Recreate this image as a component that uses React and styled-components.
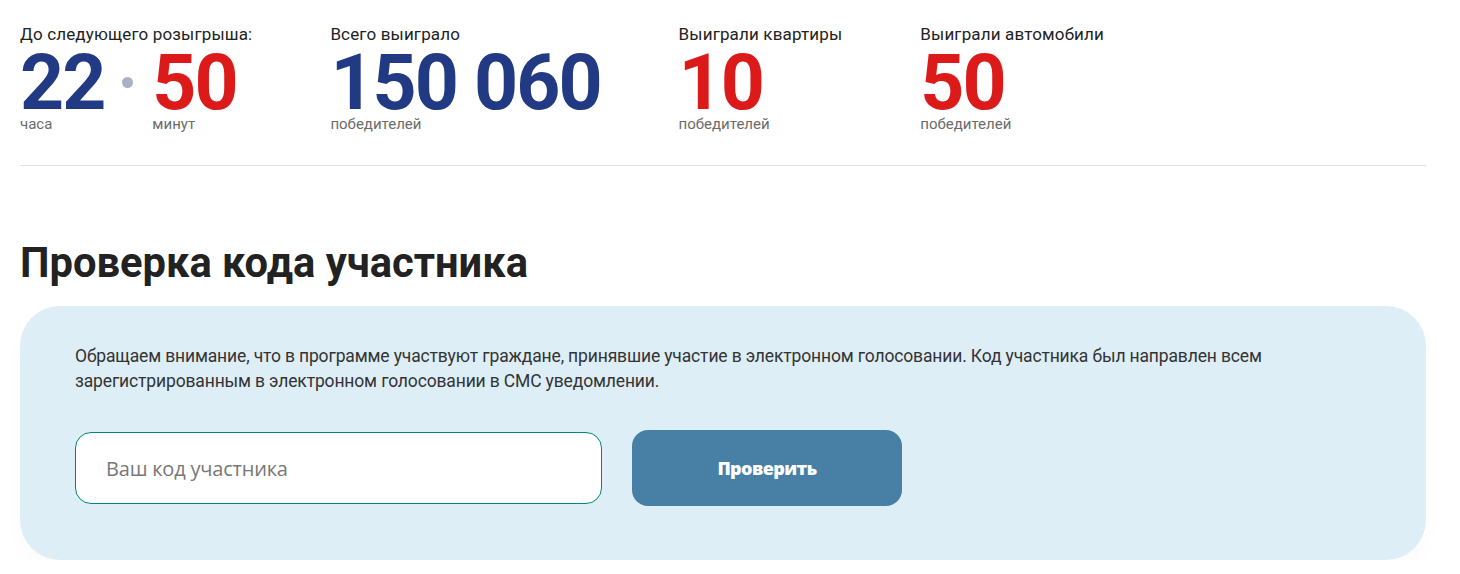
import styled, { createGlobalStyle } from "styled-components";

const GlobalStyle = createGlobalStyle`
  * { box-sizing: border-box; }
  body {
    margin: 0;
    background: #fff;
    font-family: Roboto, "Liberation Sans", sans-serif;
    color: #222;
  }
`;

const Page = styled.div`
  padding: 24px 34px 0 20px;
`;

const Stats = styled.div`
  display: flex;
  gap: 78px;
  padding-bottom: 33px;
  border-bottom: 1px solid #dde1e8;
`;

const Stat = styled.div`
  display: flex;
  flex-direction: column;
`;

const Label = styled.div`
  font-size: 17px;
  line-height: 21px;
  letter-spacing: 0.15px;
  color: #222;
`;

const Timer = styled.div`
  display: flex;
  align-items: flex-start;
`;

const TimerPart = styled.div`
  display: flex;
  flex-direction: column;
`;

const Dot = styled.span`
  width: 11px;
  height: 11px;
  border-radius: 50%;
  background: #aab1c3;
  margin: 32px 19px 0 18px;
`;

const Number = styled.div`
  font-size: 77px;
  font-weight: 700;
  line-height: 64px;
  letter-spacing: -2px;
  margin-top: 6px;
  color: ${(p) => (p.$red ? "#dd1a1a" : "#213a83")};
`;

const Caption = styled.div`
  font-size: 15px;
  line-height: 16px;
  margin-top: 1px;
  color: #6b6b6b;
`;

const Title = styled.h1`
  margin: 72px 0 0;
  font-size: 41.7px;
  line-height: 50px;
  font-weight: 700;
  color: #222;
`;

const Card = styled.div`
  margin-top: 18px;
  background: #deeef7;
  border-radius: 40px;
  padding: 38px 55px 54px;
  box-shadow: 0 12px 24px rgba(0, 0, 0, 0.02);
`;

const Text = styled.p`
  margin: 0;
  font-size: 17.5px;
  line-height: 25px;
  letter-spacing: -0.15px;
  color: #333;
`;

const Form = styled.div`
  display: flex;
  align-items: center;
  gap: 30px;
  margin-top: 36px;
`;

const Input = styled.input`
  width: 527px;
  height: 72px;
  border: 1px solid #00877a;
  border-radius: 16px;
  background: #fff;
  padding: 0 30px;
  font-family: "Open Sans", sans-serif;
  font-size: 20px;
  letter-spacing: -0.2px;
  color: #333;
  outline: none;

  &::placeholder {
    color: #777;
  }
`;

const Button = styled.button`
  width: 270px;
  height: 76px;
  border: none;
  border-radius: 16px;
  background: #4880a5;
  color: #fff;
  font-family: "Open Sans", sans-serif;
  font-size: 18px;
  font-weight: 800;
  letter-spacing: -0.6px;
  cursor: pointer;
`;

export default function App() {
  return (
    <Page>
      <GlobalStyle />
      <Stats>
        <Stat>
          <Label>До следующего розыгрыша:</Label>
          <Timer>
            <TimerPart>
              <Number>22</Number>
              <Caption>часа</Caption>
            </TimerPart>
            <Dot />
            <TimerPart>
              <Number $red>50</Number>
              <Caption>минут</Caption>
            </TimerPart>
          </Timer>
        </Stat>
        <Stat>
          <Label>Всего выиграло</Label>
          <Number>150 060</Number>
          <Caption>победителей</Caption>
        </Stat>
        <Stat>
          <Label>Выиграли квартиры</Label>
          <Number $red>10</Number>
          <Caption>победителей</Caption>
        </Stat>
        <Stat>
          <Label>Выиграли автомобили</Label>
          <Number $red>50</Number>
          <Caption>победителей</Caption>
        </Stat>
      </Stats>
      <Title>Проверка кода участника</Title>
      <Card>
        <Text>
          Обращаем внимание, что в программе участвуют граждане, принявшие
          участие в электронном голосовании. Код участника был направлен всем
          зарегистрированным в электронном голосовании в СМС уведомлении.
        </Text>
        <Form>
          <Input placeholder="Ваш код участника" />
          <Button>Проверить</Button>
        </Form>
      </Card>
    </Page>
  );
}
